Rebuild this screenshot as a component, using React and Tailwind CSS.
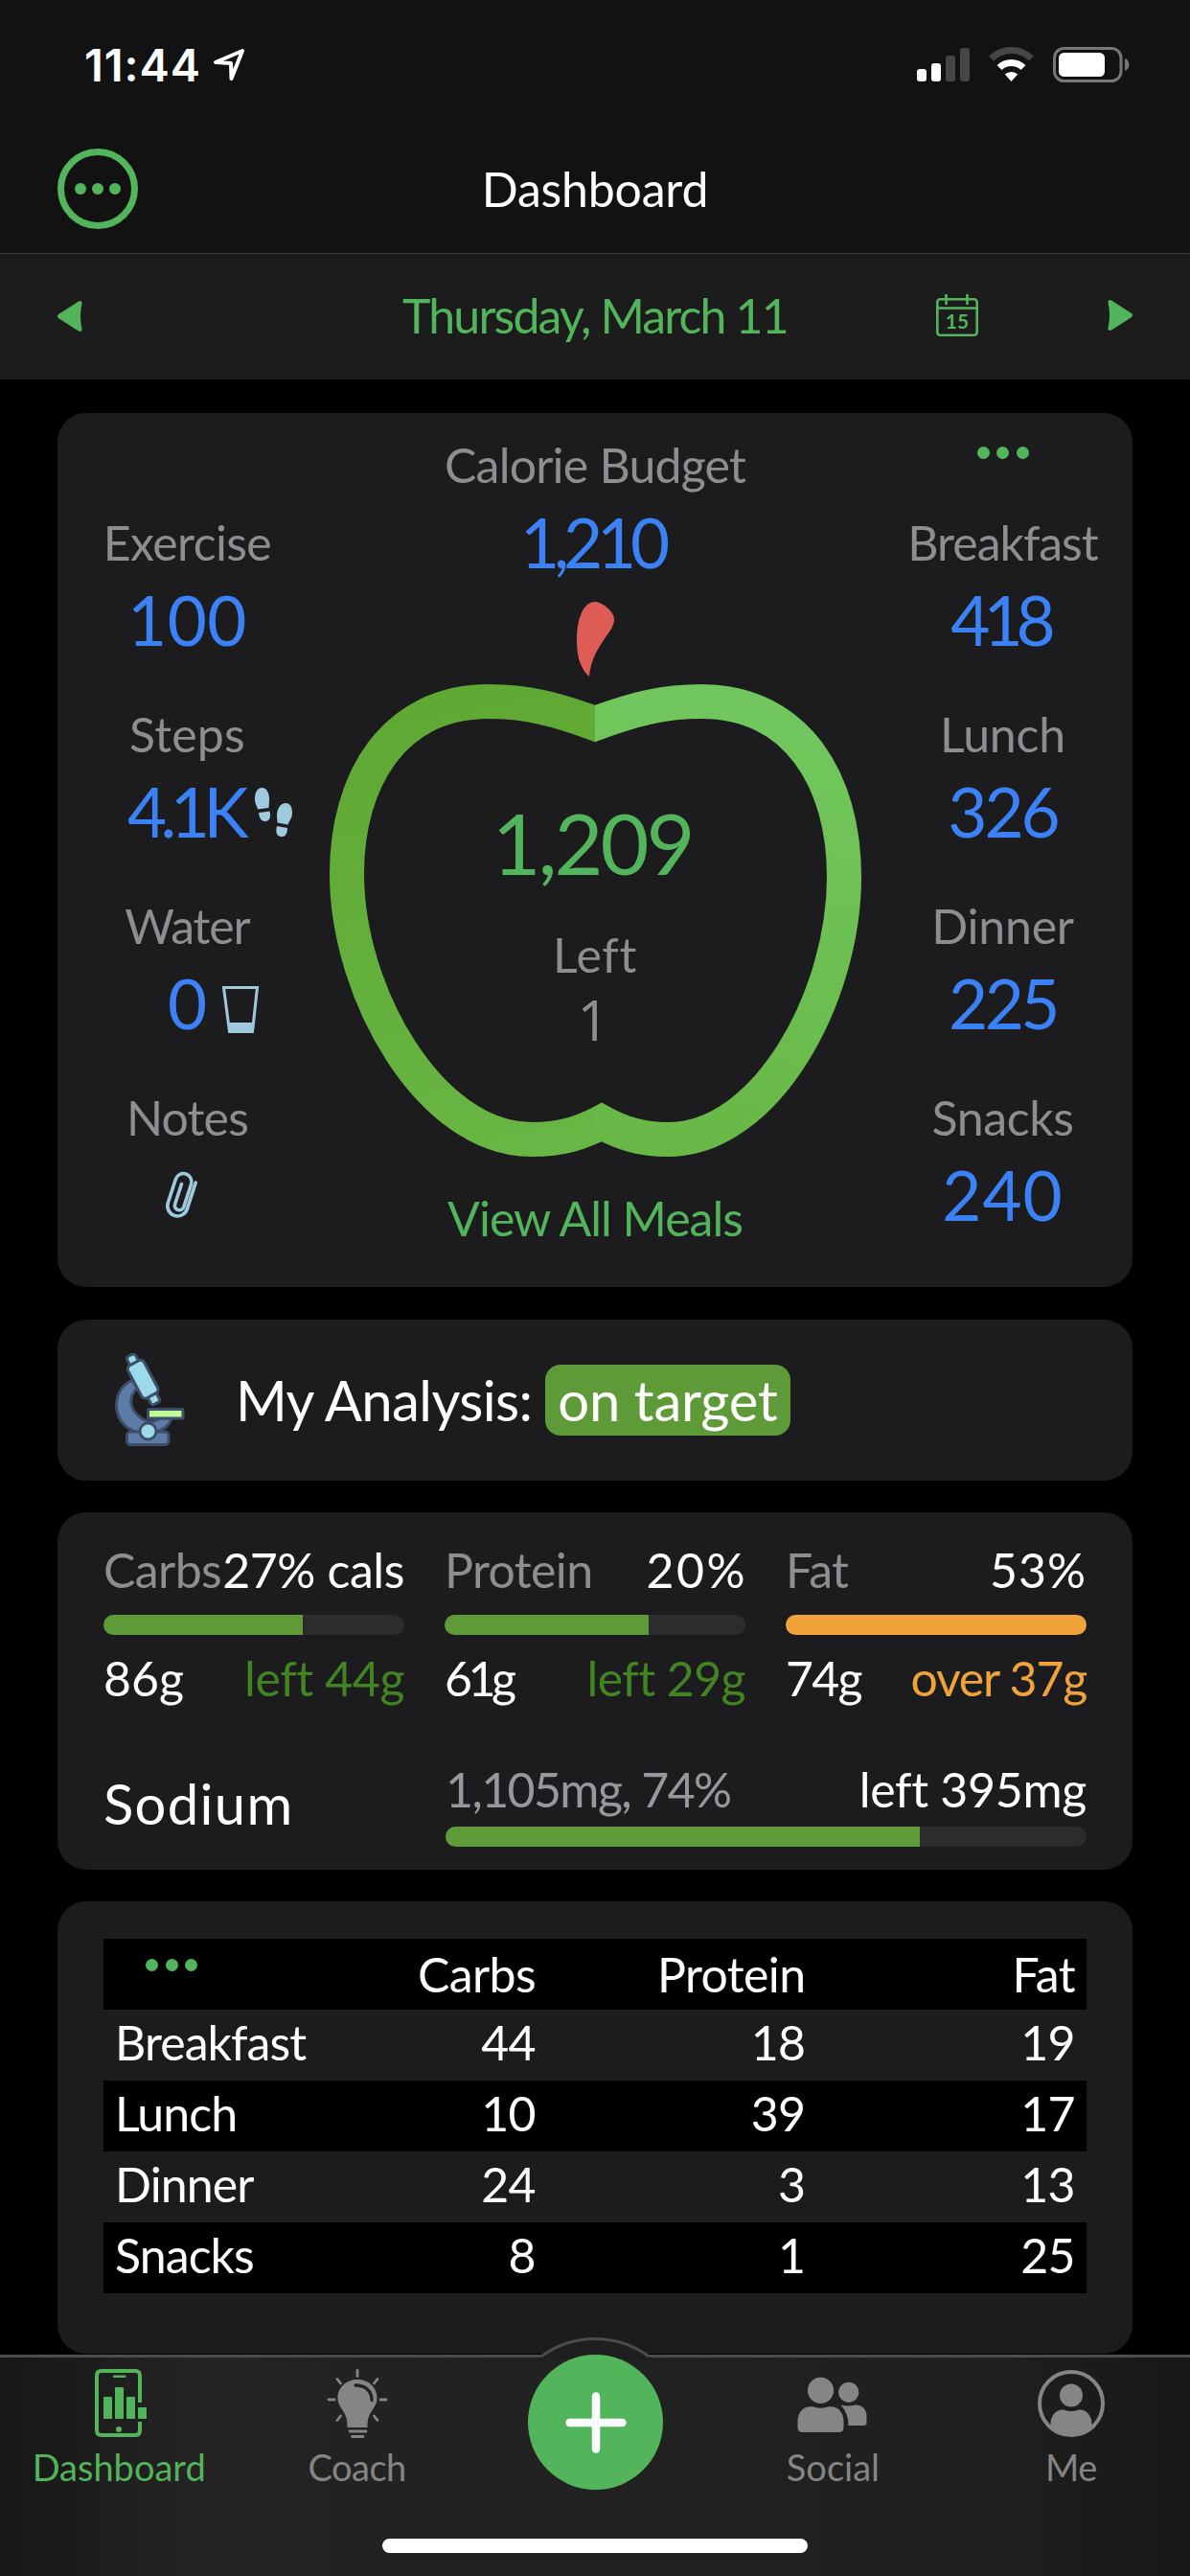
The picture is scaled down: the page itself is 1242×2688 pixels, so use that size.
const MEALS_LEFT = [
  { label: 'Exercise', value: '100', lt: 'tracking-[-0.6px]', vt: 'tracking-[0.5px]' },
  { label: 'Steps', value: '4.1K', lt: 'tracking-[0.2px]', vt: 'tracking-[-6.5px] pr-[5px]', icon: 'steps' },
  { label: 'Water', value: '0', lt: 'tracking-[-1.1px]', vt: '', icon: 'cup' },
  { label: 'Notes', icon: 'clip', lt: 'tracking-[-0.8px]', vt: '' },
];

const MEALS_RIGHT = [
  { label: 'Breakfast', value: '418', lt: 'tracking-[-1px]', vt: 'tracking-[-7px] pr-[6px]' },
  { label: 'Lunch', value: '326', lt: 'tracking-[-0.2px]', vt: 'tracking-[-3px]' },
  { label: 'Dinner', value: '225', lt: 'tracking-[-0.2px]', vt: 'tracking-[-3.5px]' },
  { label: 'Snacks', value: '240', lt: 'tracking-[-0.4px]', vt: 'tracking-[1px]' },
];

const MACROS = [
  { name: 'Carbs', pct: '27% cals', grams: '86g', rest: 'left 44g', fill: 66.2, bar: 'bg-[#5e9a37]', text: 'text-[#438422]', pctT: 'tracking-[-0.4px]', gramsT: 'tracking-[0px]', restT: 'tracking-[-0.4px]' },
  { name: 'Protein', pct: '20%', grams: '61g', rest: 'left 29g', fill: 67.8, bar: 'bg-[#5e9a37]', text: 'text-[#438422]', pctT: 'tracking-[2.5px] -mr-[2px]', gramsT: 'tracking-[-4.5px]', restT: 'tracking-[-0.6px]' },
  { name: 'Fat', pct: '53%', grams: '74g', rest: 'over 37g', fill: 100, bar: 'bg-[#f1a33b]', text: 'text-[#f1a33b]', pctT: 'tracking-[1px]', gramsT: 'tracking-[-1.8px]', restT: 'tracking-[-1.2px]' },
];

const ROWS = [
  ['Breakfast', 44, 18, 19],
  ['Lunch', 10, 39, 17],
  ['Dinner', 24, 3, 13],
  ['Snacks', 8, 1, 25],
];

const APPLE =
  'M621 755 C580 740 550 732 510 732 C410 732 362 815 362 912 C362 1035 448 1189 555 1189 C585 1189 605 1183 628 1171 C650 1183 670 1189 697 1189 C800 1189 881 1040 881 915 C881 815 832 732 732 732 C692 732 662 740 621 755 Z';

function Dots() {
  return (
    <div className="flex gap-[7.5px]">
      <span className="w-[13px] h-[13px] rounded-full bg-[#52b45b]" />
      <span className="w-[13px] h-[13px] rounded-full bg-[#52b45b]" />
      <span className="w-[13px] h-[13px] rounded-full bg-[#52b45b]" />
    </div>
  );
}

function StatusBar() {
  return (
    <div className="h-[132px] flex justify-between pl-[88px] pr-[62px] text-white">
      <div className="flex pt-[40px]">
        <span className="font-['Inter'] font-semibold text-[47px] leading-[56px] tracking-[0.9px] w-[134px]">11:44</span>
        <svg className="mt-[9px] w-[34px] h-[38px]" viewBox="221 49 34 38" fill="none" stroke="currentColor" strokeWidth="4" strokeLinejoin="round">
          <path d="M252 53 L224 65 L240 66 L240.500 82 Z" />
        </svg>
      </div>
      <svg className="mt-[45px] w-[226px] h-[44px]" viewBox="954 45 226 44" fill="none">
        <rect x="957" y="72" width="10" height="13" rx="3" fill="#fff" />
        <rect x="972" y="66" width="10" height="19" rx="3" fill="#fff" />
        <rect x="987" y="58" width="10" height="27" rx="3" fill="#464646" />
        <rect x="1002" y="50" width="10" height="35" rx="3" fill="#464646" />
        <path d="M1034.500 61 A30 30 0 0 1 1076.500 61" stroke="#464646" strokeWidth="7" />
        <path d="M1043 70.500 A18 18 0 0 1 1068 70.500" stroke="#fff" strokeWidth="7" />
        <path d="M1055.500 85 L1048.800 77.500 A10 10 0 0 1 1062.200 77.500 Z" fill="#fff" />
        <rect x="1100.500" y="50.500" width="69.500" height="34" rx="10" stroke="#777" strokeWidth="3" />
        <rect x="1105" y="55" width="48" height="25" rx="5.500" fill="#fff" />
        <path d="M1174 61 A7 7 0 0 1 1174 74 Z" fill="#777" />
      </svg>
    </div>
  );
}

function StepsIcon() {
  return (
    <svg className="absolute left-[206px] top-[15px] w-[40px] h-[54px]" viewBox="266 821 40 54" fill="#9fcadd">
      <path d="M266 834 C266 826 269 822 273.500 822 C279 822 281.500 829 281 836 L280.500 843 L269 844.500 C268 840 266 839 266 834 Z" />
      <path d="M270 848 L281.500 846.500 C283 852 281.500 856.500 277 857 C272.500 857.500 270.500 853 270 848 Z" />
      <path d="M305 848 C305 841 302 837.500 297.500 838 C292 838.500 289 845 289 851 L289.500 858.500 L300.500 860.500 C302 856 305 854 305 848 Z" />
      <path d="M289 862 L300 864 C300 870 297.500 873.500 293.500 873 C288.500 872.500 287.500 868 289 862 Z" />
    </svg>
  );
}

function CupIcon() {
  return (
    <svg className="absolute left-[171px] top-[21px] w-[40px] h-[52px]" viewBox="231 1026 40 52">
      <path d="M233.500 1029.500 H268.500 L263.500 1075.500 H239.500 Z" fill="none" stroke="#9fcadd" strokeWidth="3" />
      <path d="M238 1066 H265 L264 1076 H239 Z" fill="#9fcadd" />
    </svg>
  );
}

function ClipIcon() {
  return (
    <svg className="mr-[13px] w-[44px] h-[60px]" viewBox="-22 -30 44 60" fill="none" stroke="#9fcadd" strokeWidth="3.600" strokeLinecap="round">
      <path transform="rotate(18)" d="M10.500 -17 V12 a10.500 10.500 0 0 1 -21 0 V-14 a8.500 8.500 0 0 1 17 0 V11 a4.800 4.800 0 0 1 -9.600 0 V-11" />
    </svg>
  );
}

function Stat({ label, value, lt, vt, icon }) {
  return (
    <div className="relative h-[200px] text-center whitespace-nowrap">
      <p className={`text-[50px] leading-[60px] text-[#8e8d92] ${lt}`}>{label}</p>
      <div className="relative mt-[10px] h-[80px] pt-[2px] flex items-center justify-center">
        {value && <span className={`text-[71px] leading-[80px] text-[#3b82f7] ${vt}`}>{value}</span>}
        {icon === 'steps' && <StepsIcon />}
        {icon === 'cup' && <CupIcon />}
        {icon === 'clip' && <ClipIcon />}
      </div>
    </div>
  );
}

function Apple() {
  return (
    <svg className="w-[556px] h-[590px]" viewBox="343 620 556 590" fill="none">
      <defs>
        <linearGradient id="appleLeft" gradientUnits="userSpaceOnUse" x1="500" y1="714" x2="600" y2="1207">
          <stop offset="0" stopColor="#5fa833" />
          <stop offset="1" stopColor="#68b645" />
        </linearGradient>
        <linearGradient id="appleRight" gradientUnits="userSpaceOnUse" x1="740" y1="714" x2="640" y2="1207">
          <stop offset="0" stopColor="#71c75e" />
          <stop offset="1" stopColor="#68b746" />
        </linearGradient>
        <clipPath id="clipL"><rect x="330" y="700" width="291" height="520" /></clipPath>
        <clipPath id="clipR"><rect x="621" y="700" width="290" height="520" /></clipPath>
      </defs>
      <path d="M615 706 C605 697 602 684 602 668 C602 645 609 628 621 628 C628 628 641 638 641 646 C641 655 634 661 628 671 C620 683 616 694 615 706 Z" fill="#de5c56" />
      <path d={APPLE} stroke="url(#appleLeft)" strokeWidth="36" clipPath="url(#clipL)" />
      <path d={APPLE} stroke="url(#appleRight)" strokeWidth="36" clipPath="url(#clipR)" />
    </svg>
  );
}

function Microscope() {
  return (
    <svg className="w-[80px] h-[104px]" viewBox="116 1409 80 104" stroke="#3d4f68" strokeWidth="3" strokeLinejoin="round">
      <path d="M138 1440 C126 1446 121.500 1457 121.500 1467 C122 1483 134 1495 150 1495 C165 1496 176 1490 179 1480 L166 1480 C160 1486 150 1483 144 1477 C135 1469 134 1457 143 1449 Z" fill="#5c7ba6" />
      <rect x="132.500" y="1494" width="43.500" height="13.500" rx="4" fill="#5c7ba6" />
      <circle cx="154.500" cy="1493.500" r="8.500" fill="#9cdae9" />
      <g transform="rotate(-28 149 1439)">
        <rect x="144" y="1411" width="10" height="12" rx="3" fill="#9cdae9" />
        <rect x="144.500" y="1457" width="10" height="11" rx="2.500" fill="#9cdae9" />
        <rect x="139.500" y="1420" width="19" height="38.500" rx="4.500" fill="#9cdae9" />
      </g>
      <rect x="154.500" y="1470.500" width="36.500" height="9.500" rx="1" fill="#bdfc97" />
    </svg>
  );
}

function Tab({ label, active, tracking, children }) {
  return (
    <div className={`flex-1 flex flex-col items-center ${active ? 'text-[#52b45b]' : 'text-[#858585]'}`}>
      {children}
      <span className={`mt-[3px] text-[38px] leading-[46px] ${tracking}`}>{label}</span>
    </div>
  );
}

function TabBar() {
  return (
    <div className="absolute left-0 bottom-0 w-full h-[231px] border-t-[3px] border-[#4c4c4c] bg-[linear-gradient(90deg,#171717_0%,#252323_16%,#222222_45%,#1f1f1f_85%,#171717_100%)]">
      <svg className="absolute left-[551px] top-[-24px] w-[140px] h-[27px]" viewBox="551 2436 140 27">
        <path d="M563 2463 V2460 Q590 2440.500 621 2440.500 Q652 2440.500 679 2460 V2463 Z" fill="#1f1f20" />
        <path d="M564.500 2459 Q590 2440.500 621 2440.500 Q652 2440.500 677.500 2459" fill="none" stroke="#4c4c4c" strokeWidth="3" />
      </svg>
      <div className="flex pt-[8px]">
        <Tab label="Dashboard" active tracking="tracking-[0px]">
          <svg className="w-[76px] h-[80px]" viewBox="86 2468 76 80" fill="currentColor">
            <path d="M146 2507 V2479 Q146 2474 141 2474 H106 Q101 2474 101 2479 V2536 Q101 2541 106 2541 H141 Q146 2541 146 2536 V2527" fill="none" stroke="currentColor" strokeWidth="4" />
            <rect x="118" y="2478.500" width="13.500" height="2.500" rx="1" />
            <rect x="108" y="2501" width="9" height="23" rx="1" />
            <rect x="120" y="2491" width="9" height="33" rx="1" />
            <rect x="132" y="2501" width="9" height="23" rx="1" />
            <rect x="144" y="2512" width="9" height="12" rx="1" />
            <circle cx="124" cy="2535" r="3" />
          </svg>
        </Tab>
        <Tab label="Coach" tracking="tracking-[-0.5px]">
          <svg className="w-[76px] h-[80px]" viewBox="334.500 2468 76 80" fill="currentColor" stroke="currentColor" strokeWidth="2.800" strokeLinecap="round">
            <path stroke="none" d="M362 2533 C362 2524 361 2521 357 2515 C353.500 2510 352 2507 352 2502 C352 2491 361 2483 372.500 2483 C384 2483 393 2491 393 2502 C393 2507 391.500 2510 388 2515 C384 2521 383 2524 383 2533 Z" />
            <path d="M370.500 2489 C381 2489 387.500 2495 387.500 2504.500" fill="none" stroke="#222" strokeWidth="3.300" />
            <path d="M364.500 2537 H381.500 M367 2542.500 H378.500 M372.500 2473.500 V2479.500 M342.500 2504 H348.500 M396.500 2504 H402.500 M351.500 2482.500 L355 2487 M393.500 2482.500 L390 2487 M355 2521 L351.500 2525.500 M390 2521 L393.500 2525.500" fill="none" />
          </svg>
        </Tab>
        <div className="flex-1" />
        <Tab label="Social" tracking="tracking-[0px]">
          <svg className="w-[76px] h-[80px]" viewBox="831.500 2468 76 80" fill="currentColor">
            <circle cx="857" cy="2494.300" r="13.600" />
            <circle cx="886.300" cy="2496.300" r="10.600" />
            <path d="M833 2533 V2527 C833 2516 840 2510 850 2511.500 Q857 2514 864 2511.500 C874 2510 881 2516 881 2527 V2533 Q881 2538 876 2538 H838 Q833 2538 833 2533 Z" />
            <path d="M878 2509.500 Q886 2511.500 893 2509.500 C900 2509 905 2514 905 2521 V2528 Q905 2531 902 2531 H886 Q886 2518 878 2509.500 Z" />
          </svg>
        </Tab>
        <Tab label="Me" tracking="tracking-[-0.5px]">
          <svg className="w-[76px] h-[80px]" viewBox="1080 2468 76 80" fill="currentColor">
            <circle cx="1118" cy="2508" r="33" fill="none" stroke="currentColor" strokeWidth="4" />
            <circle cx="1118" cy="2499.500" r="12" />
            <path d="M1096.500 2534 V2529 C1096.500 2519 1104 2513.500 1110 2514.500 Q1118 2517.500 1126 2514.500 C1132 2513.500 1139.500 2519 1139.500 2529 V2534 Q1130 2542 1118 2542 Q1106 2542 1096.500 2534 Z" />
          </svg>
        </Tab>
      </div>
      <div className="absolute left-[551px] top-[-3px] w-[141px] h-[141px] rounded-full bg-[#52b45b] flex items-center justify-center">
        <svg className="w-[66px] h-[66px]" viewBox="0 0 66 66" stroke="#fff" strokeWidth="8.500" strokeLinecap="round">
          <path d="M33 5.500 V60.500 M5.500 33 H60.500" />
        </svg>
      </div>
      <div className="absolute left-[399px] bottom-[24px] w-[444px] h-[15px] rounded-full bg-white" />
    </div>
  );
}

export default function App() {
  return (
    <div className="relative w-[1242px] h-[2688px] overflow-hidden bg-black font-['Lato',sans-serif] text-white">
      <header className="h-[265px] bg-[#121212] border-b border-[#3b3b3c]">
        <StatusBar />
        <div className="grid grid-cols-[1fr_auto_1fr] px-[60px]">
          <div className="mt-[23px] w-[84px] h-[84px] rounded-full border-[7px] border-[#52b45b] flex items-center justify-center gap-[6px]">
            <span className="w-[12px] h-[12px] rounded-full bg-[#52b45b]" />
            <span className="w-[12px] h-[12px] rounded-full bg-[#52b45b]" />
            <span className="w-[12px] h-[12px] rounded-full bg-[#52b45b]" />
          </div>
          <h1 className="mt-[35px] text-[50px] leading-[60px] tracking-[-0.2px]">Dashboard</h1>
        </div>
      </header>

      {/* Date picker row */}
      <div className="h-[131px] bg-[#1c1c1c] grid grid-cols-[1fr_auto_1fr] px-[60px] text-[#52b45b]">
        <svg className="mt-[48px] w-[26px] h-[34px]" viewBox="0 0 26 34" fill="currentColor">
          <path d="M1 15 L22 1.500 Q26 0 25.500 4 Q22.500 17 25.500 30 Q26 34 22 32.500 L1 19 Q-1 17 1 15 Z" />
        </svg>
        <span className="mt-[34px] text-[50px] leading-[60px] tracking-[-1.85px] whitespace-nowrap">Thursday, March 11</span>
        <div className="flex justify-end">
          <svg className="mt-[41px] mr-[134px] w-[46px] h-[46px]" viewBox="976 306 46 46" fill="none" stroke="currentColor" strokeWidth="2.600">
            <rect x="978.300" y="312.300" width="41.400" height="37.400" rx="3" />
            <path d="M978 321.500 H1020 M987.500 307 V318 M1009.500 307 V318" />
            <text x="999" y="343" textAnchor="middle" fontSize="21" fontWeight="700" fill="currentColor" stroke="none">15</text>
          </svg>
          <svg className="mt-[47px] w-[26px] h-[34px]" viewBox="0 0 26 34" fill="currentColor">
            <path d="M25 15 L4 1.500 Q0 0 0.500 4 Q3.500 17 0.500 30 Q0 34 4 32.500 L25 19 Q27 17 25 15 Z" />
          </svg>
        </div>
      </div>

      <main className="px-[60px] pt-[35px]">
        {/* Calorie summary */}
        <section className="h-[912px] rounded-[30px] bg-[#1c1c1e] grid grid-cols-[271px_1fr_271px]">
          <div className="pt-[105px]">
            {MEALS_LEFT.map(s => <Stat key={s.label} {...s} />)}
          </div>
          <div className="pt-[24px] flex flex-col items-center">
            <p className="text-[50px] leading-[60px] tracking-[-0.8px] text-[#8e8d92]">Calorie Budget</p>
            <p className="mt-[11px] pr-[6px] text-[71px] leading-[80px] tracking-[-6.2px] text-[#3b82f7]">1,210</p>
            <div className="relative mt-[14px]">
              <Apple />
              <div className="absolute inset-0 pt-[209px] flex flex-col items-center text-[#8e8d92]">
                <p className="pr-[6px] text-[88px] leading-[100px] tracking-[-3px] text-[#52b45b]">1,209</p>
                <p className="mt-[37px] text-[50px] leading-[60px] tracking-[0.6px]">Left</p>
                <p className="mt-[3px] pr-[4px] font-['Open_Sans'] text-[58px] leading-[70px]">1</p>
              </div>
            </div>
            <a className="mt-[31px] text-[50px] leading-[60px] tracking-[-1px] text-[#52b45b]">View All Meals</a>
          </div>
          <div>
            <div className="h-[105px] pt-[35px] flex justify-center"><Dots /></div>
            {MEALS_RIGHT.map(s => <Stat key={s.label} {...s} />)}
          </div>
        </section>

        {/* Analysis */}
        <section className="mt-[34px] h-[168px] rounded-[30px] bg-[#1c1c1e] flex items-center pl-[56px]">
          <Microscope />
          <p className="ml-[50px] w-[309px] text-[58px] leading-[70px] tracking-[-0.6px] whitespace-nowrap">My Analysis:</p>
          <span className="ml-[14px] w-[256px] h-[74px] rounded-[16px] bg-[#5e9a37] text-center text-[58px] leading-[74px] tracking-[-0.2px] whitespace-nowrap">on target</span>
        </section>

        {/* Macros */}
        <section className="mt-[33px] h-[373px] rounded-[30px] bg-[#1c1c1e] px-[48px] pt-[30px]">
          <div className="grid grid-cols-3 gap-[42px]">
            {MACROS.map(m => (
              <div key={m.name} className="text-[50px] leading-[60px] tracking-[-0.6px] whitespace-nowrap">
                <div className="flex justify-between">
                  <span className="text-[#8e8d92]">{m.name}</span>
                  <span className={m.pctT}>{m.pct}</span>
                </div>
                <div className="mt-[17px] h-[21px] rounded-full bg-[#2c2c2e] overflow-hidden">
                  <div className={`h-full ${m.bar}`} style={{ width: `${m.fill}%` }} />
                </div>
                <div className="mt-[15px] flex justify-between">
                  <span className={m.gramsT}>{m.grams}</span>
                  <span className={`${m.text} ${m.restT}`}>{m.rest}</span>
                </div>
              </div>
            ))}
          </div>
          <div className="mt-[56px] flex">
            <p className="w-[357px] pt-[10px] text-[58px] leading-[70px] tracking-[1.3px]">Sodium</p>
            <div className="flex-1 text-[50px] leading-[60px]">
              <div className="flex justify-between">
                <span className="text-[#98979e] tracking-[-1.6px]">1,105mg, 74%</span>
                <span className="tracking-[-0.3px]">left 395mg</span>
              </div>
              <div className="mt-[9px] h-[21px] rounded-full bg-[#2c2c2e] overflow-hidden">
                <div className="h-full w-[74%] bg-[#5e9a37]" />
              </div>
            </div>
          </div>
        </section>

        {/* Macros per meal */}
        <section className="mt-[33px] h-[472px] rounded-[30px] bg-[#1c1c1e] px-[48px] pt-[39px] text-[50px] tracking-[-0.6px]">
          <div className="h-[74px] bg-black grid grid-cols-[225px_238px_1fr_1fr] leading-[74px] text-right">
            <div className="pl-[44px] pt-[21px]"><Dots /></div>
            <span className="pr-[12px]">Carbs</span>
            <span className="pr-[12px]">Protein</span>
            <span className="pr-[12px]">Fat</span>
          </div>
          {ROWS.map(([meal, carbs, protein, fat], i) => (
            <div key={meal} className={`h-[74px] grid grid-cols-[225px_238px_1fr_1fr] leading-[68px] text-right ${i % 2 ? 'bg-black' : ''}`}>
              <span className="pl-[12px] text-left tracking-[-0.9px]">{meal}</span>
              <span className="pr-[12px]">{carbs}</span>
              <span className="pr-[12px]">{protein}</span>
              <span className="pr-[12px]">{fat}</span>
            </div>
          ))}
        </section>
      </main>

      <TabBar />
    </div>
  );
}
